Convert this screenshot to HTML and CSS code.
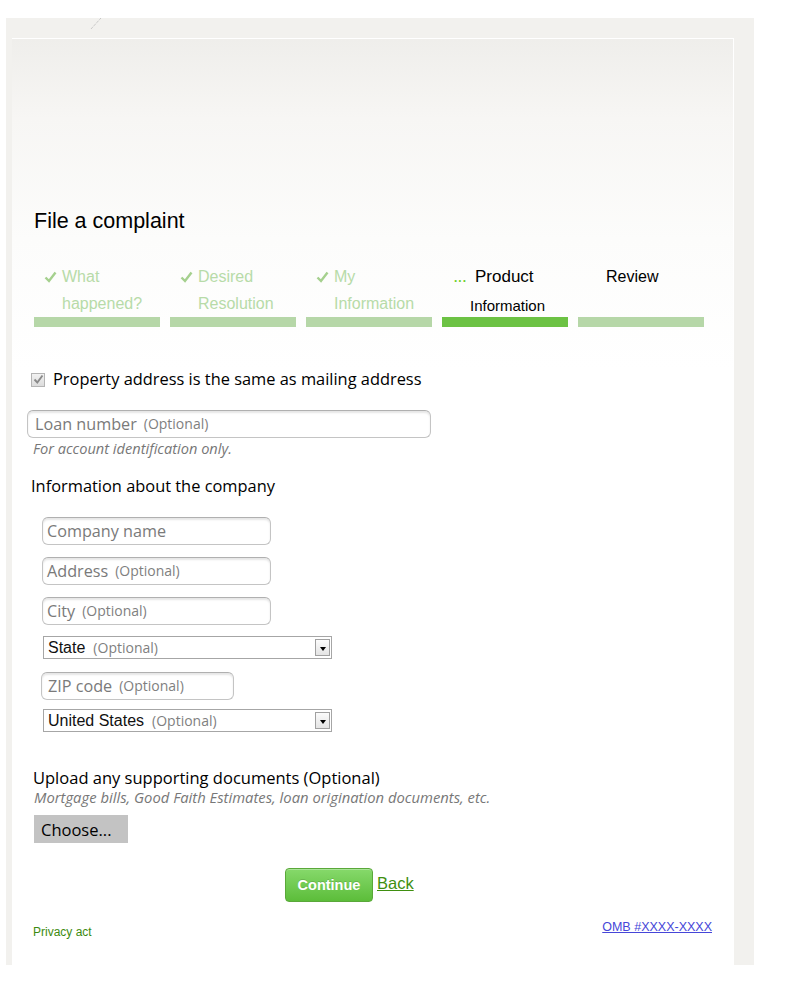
FILE: index.html
```html
<!DOCTYPE html>
<html lang="en">

<head>
    <meta charset="UTF-8">
    <meta name="viewport" content="width=device-width, initial-scale=1.0">
    <title>File a complaint</title>
    <link rel="stylesheet" href="styles.css">
</head>

<body>
    <div class="frame">
        <svg class="scratch" width="12" height="12" viewBox="0 0 12 12">
            <line x1="11" y1="0" x2="1" y2="11" stroke="#b5b5b5" stroke-width="1" stroke-dasharray="1 1" />
        </svg>

        <div class="panel">
            <h1>File a complaint</h1>

            <ol class="steps">
                <li class="step done">
                    <span class="mark"><svg width="13" height="12" viewBox="0 0 13 12"><path d="M1.5 6.5 L5 10 L11.5 1.5" fill="none" stroke="#a5d08e" stroke-width="2.4" /></svg></span>What<br>happened?
                </li>
                <li class="step done">
                    <span class="mark"><svg width="13" height="12" viewBox="0 0 13 12"><path d="M1.5 6.5 L5 10 L11.5 1.5" fill="none" stroke="#a5d08e" stroke-width="2.4" /></svg></span>Desired<br>Resolution
                </li>
                <li class="step done">
                    <span class="mark"><svg width="13" height="12" viewBox="0 0 13 12"><path d="M1.5 6.5 L5 10 L11.5 1.5" fill="none" stroke="#a5d08e" stroke-width="2.4" /></svg></span>My<br>Information
                </li>
                <li class="step current">
                    <span class="mark dots">...</span><span class="big">Product</span><br><span class="small">Information</span>
                </li>
                <li class="step">Review</li>
            </ol>

            <form class="complaint">
                <label class="check-row">
                    <span class="checkbox"><svg width="11" height="11" viewBox="0 0 11 11"><path d="M1.5 5.5 L4.3 8.5 L9.5 1.5" fill="none" stroke="#8a8a8a" stroke-width="1.9" /></svg></span>
                    Property address is the same as mailing address
                </label>

                <div class="field loan"><span class="ph">Loan number</span><span class="opt">(Optional)</span></div>
                <p class="hint">For account identification only.</p>

                <h2 class="section">Information about the company</h2>

                <div class="company">
                    <div class="field mid"><span class="ph">Company name</span></div>
                    <div class="field mid"><span class="ph">Address</span><span class="opt">(Optional)</span></div>
                    <div class="field mid"><span class="ph">City</span><span class="opt">(Optional)</span></div>
                    <div class="select"><span class="value">State</span><span class="opt">(Optional)</span><span class="arrow"></span></div>
                    <div class="field zip"><span class="ph">ZIP code</span><span class="opt">(Optional)</span></div>
                    <div class="select"><span class="value">United States</span><span class="opt">(Optional)</span><span class="arrow"></span></div>
                </div>

                <h2 class="section upload">Upload any supporting documents (Optional)</h2>
                <p class="hint wide">Mortgage bills, Good Faith Estimates, loan origination documents, etc.</p>
                <button type="button" class="choose">Choose...</button>

                <div class="actions">
                    <button type="submit" class="continue">Continue</button>
                    <a href="#" class="back">Back</a>
                </div>
            </form>

            <footer class="foot">
                <a href="#" class="privacy">Privacy act</a>
                <a href="#" class="omb">OMB #XXXX-XXXX</a>
            </footer>
        </div>
    </div>
</body>

</html>
```

FILE: styles.css
```css
* {
    box-sizing: border-box;
    margin: 0;
    padding: 0;
}

body {
    background: #ffffff;
    font-family: "Open Sans", "Noto Sans", sans-serif;
    color: #111111;
}

.frame {
    position: relative;
    width: 748px;
    height: 947px;
    margin: 18px 0 0 6px;
    padding: 20px 20px 0 6px;
    background: #f2f1ee;
}

.scratch {
    position: absolute;
    top: 0;
    left: 84px;
}

.panel {
    height: 100%;
    background: linear-gradient(#efeeeb 0, #f7f6f4 80px, #fcfcfb 200px, #ffffff 330px);
    border-top: 1px solid #ffffff;
    border-right: 1px solid #ffffff;
}

h1 {
    padding: 169px 0 0 22px;
    font: normal 21.5px/26px "Liberation Sans", Arial, sans-serif;
    color: #000000;
}

/* progress steps */
.steps {
    display: flex;
    gap: 10px;
    margin: 29px 0 0 22px;
    list-style: none;
}

.step {
    width: 126px;
    height: 64px;
    padding-left: 28px;
    border-bottom: 10px solid #b6d7a8;
    font: 16px/27px "Liberation Sans", Arial, sans-serif;
    color: #000000;
}

.step.done {
    color: #b7dba8;
    text-indent: -18px;
}

.step.current {
    border-bottom-color: #6cc244;
    text-indent: -17px;
}

.mark {
    display: inline-block;
    width: 18px;
    text-indent: 0;
}

.mark svg {
    vertical-align: -1px;
}

.mark.dots {
    width: 22px;
    padding-left: 1px;
    color: #6fcf2a;
    font-size: 12px;
    font-weight: bold;
    letter-spacing: 1px;
}

.step .big {
    font-size: 17px;
}

.step .small {
    font-size: 15px;
}

/* form */
.complaint {
    margin-top: 42px;
    padding-left: 15px;
}

.check-row {
    display: flex;
    align-items: center;
    gap: 8px;
    margin-left: 4px;
    font-size: 16.4px;
    line-height: 20px;
    color: #000000;
}

.checkbox {
    display: flex;
    align-items: center;
    justify-content: center;
    width: 14px;
    height: 14px;
    margin-top: 1px;
    border: 1px solid #b4b4b4;
    background: linear-gradient(#f2f2f2, #dcdcdc);
}

.field {
    display: flex;
    align-items: center;
    height: 28px;
    padding-left: 6px;
    border: 1px solid #c4c4c4;
    border-top-color: #b0b0b0;
    border-radius: 6px;
    background: #ffffff;
    box-shadow: inset 0 2px 2px rgba(0, 0, 0, 0.1);
    color: #7a7a7a;
}

.ph {
    font-size: 16.2px;
}

.opt {
    margin-left: 7px;
    font-size: 14px;
    color: #7f7f7f;
    position: relative;
    top: -1px;
}

.field.loan {
    width: 404px;
    margin-top: 21px;
    padding-left: 7px;
}

.hint {
    margin: 2px 0 0 6px;
    font-size: 14.6px;
    line-height: 16px;
    font-style: italic;
    color: #777777;
}

.section {
    margin: 20px 0 0 4px;
    font-size: 16.4px;
    font-weight: normal;
    line-height: 20px;
    color: #000000;
}

.company {
    display: flex;
    flex-direction: column;
    align-items: flex-start;
    margin-top: 21px;
    padding-left: 15px;
}

.field.mid {
    width: 229px;
    margin-bottom: 12px;
    padding-left: 4px;
}

.field.zip {
    width: 193px;
    margin: 0 0 10px -1px;
}

.select {
    position: relative;
    display: flex;
    align-items: center;
    width: 289px;
    height: 23px;
    margin: -1px 0 13px 1px;
    padding-left: 4px;
    border: 1px solid #a6a6a6;
    background: #ffffff;
}

.select .value {
    font: 16px "Liberation Sans", Arial, sans-serif;
    color: #111111;
}

.select .opt {
    margin-left: 8px;
    top: 0;
}

.arrow {
    position: absolute;
    top: 2px;
    right: 1px;
    width: 15px;
    height: 17px;
    border: 1px solid #a0a0a0;
    background: linear-gradient(#fbfbfb, #e4e4e4);
}

.arrow::after {
    content: "";
    position: absolute;
    top: 7px;
    left: 4px;
    border-left: 3px solid transparent;
    border-right: 3px solid transparent;
    border-top: 4px solid #000000;
}

.section.upload {
    margin: 23px 0 0 6px;
    font-size: 16.5px;
}

.hint.wide {
    margin: 1px 0 0 7px;
    font-size: 14.8px;
}

.choose {
    display: block;
    width: 94px;
    height: 28px;
    margin: 10px 0 0 7px;
    padding-left: 7px;
    border: none;
    background: #c3c3c3;
    font: 16.5px "Open Sans", "Noto Sans", sans-serif;
    color: #000000;
    text-align: left;
}

.actions {
    display: flex;
    align-items: flex-start;
    margin: 25px 0 0 258px;
}

.continue {
    width: 88px;
    height: 34px;
    border: 1px solid #5aa83a;
    border-radius: 4px;
    background: linear-gradient(#86d96b, #5cbd3a);
    color: #ffffff;
    font: bold 14.5px "Liberation Sans", Arial, sans-serif;
    text-shadow: 0 -1px 0 rgba(0, 0, 0, 0.15);
    box-shadow: inset 0 1px 0 rgba(255, 255, 255, 0.3);
}

.back {
    margin: 5px 0 0 4px;
    font: 16.5px/20px "Liberation Sans", Arial, sans-serif;
    color: #3f8f10;
}

.foot {
    display: flex;
    justify-content: space-between;
    align-items: flex-start;
    margin-top: 18px;
    padding: 0 21px 0 21px;
    font: 12px/14px "Liberation Sans", Arial, sans-serif;
}

.privacy {
    margin-top: 5px;
    color: #3d8b10;
    text-decoration: none;
}

.omb {
    font-size: 12.5px;
    color: #4646d8;
}
```
